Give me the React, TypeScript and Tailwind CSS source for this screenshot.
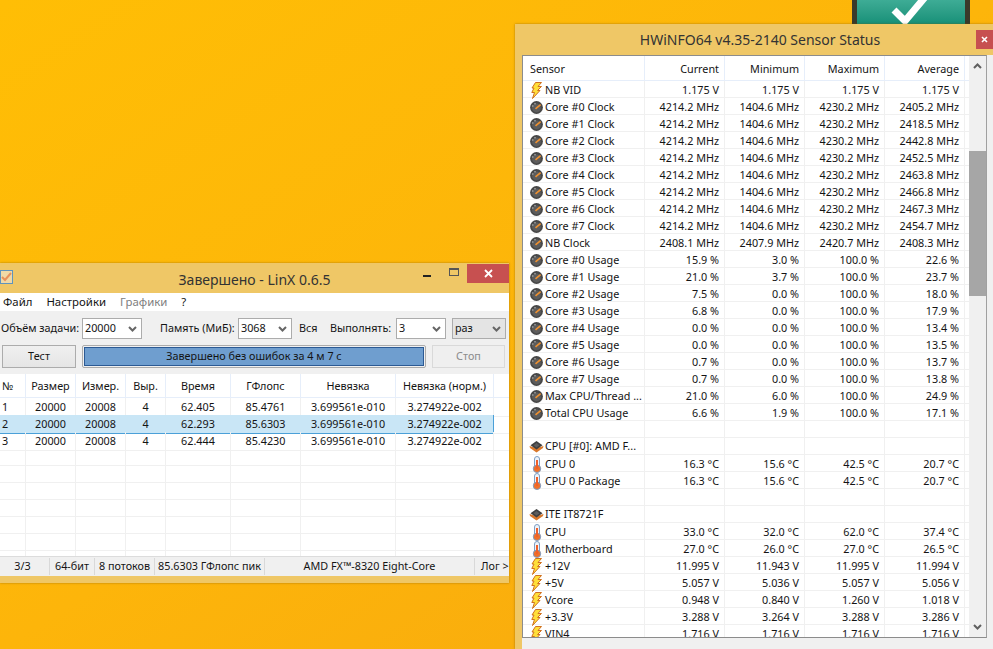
import React from "react";

const font = { fontFamily: '"Noto Sans", "Open Sans", sans-serif' };

function Bolt() {
  return (
    <svg width="11" height="17" viewBox="0 0 11 17" className="shrink-0">
      <path d="M4.5 0.5 L10.5 0.5 L7 4.5 L10.5 4.5 L6.5 8.5 L9 8.5 L1.5 16.5 L3.5 10.5 L0.8 10.5 L3 6 L1 6 Z" fill="#ffdf3a" stroke="#d0701f" strokeWidth="1" />
    </svg>
  );
}
function Gauge() {
  return (
    <svg width="13" height="13" viewBox="0 0 13 13" className="shrink-0">
      <circle cx="6.5" cy="6.5" r="6.4" fill="#474747" />
      <circle cx="6.5" cy="7" r="4.4" fill="#5c5c5c" />
      <circle cx="2.8" cy="5" r="0.7" fill="#c4c4c4" />
      <circle cx="5" cy="2.8" r="0.7" fill="#c4c4c4" />
      <path d="M5.5 7.8 L10.6 3.6" stroke="#ee9030" strokeWidth="1.7" />
    </svg>
  );
}
function Thermo() {
  return (
    <svg width="10" height="17" viewBox="0 0 10 17" className="shrink-0">
      <rect x="2.5" y="0.5" width="5" height="12" rx="2.5" fill="#eef3fa" stroke="#7d9ec4" />
      <circle cx="5" cy="12.8" r="3.7" fill="#f0702a" stroke="#7d9ec4" />
      <rect x="4" y="4" width="2" height="9" fill="#f0602a" />
    </svg>
  );
}
function Chip() {
  return (
    <svg width="15" height="13" viewBox="0 0 15 13" className="shrink-0">
      <path d="M7.5 8 L14.5 6 L14 8 L7.5 12.5 L1 8 L0.5 6 Z" fill="#d9782c" />
      <path d="M7.5 1 L13.5 5.2 L7.5 9.5 L1.5 5.2 Z" fill="#3f3f3f" />
      <path d="M7.5 3 L10.5 5.2 L7.5 7.4 L4.5 5.2 Z" fill="#5c5c5c" />
    </svg>
  );
}

function Chevron({ up = false, color = "#555" }: { up?: boolean; color?: string }) {
  return (
    <svg width="9" height="6" viewBox="0 0 9 6">
      <path d={up ? "M1 5 L4.5 1.5 L8 5" : "M1 1 L4.5 4.5 L8 1"} fill="none" stroke={color} strokeWidth="2" />
    </svg>
  );
}

function Combo({ w, value, gray = false }: { w: string; value: string; gray?: boolean }) {
  return (
    <div className={`${w} ${gray ? "bg-[#e4e4e4]" : "bg-white"} h-[21px] border border-[#acacac] flex items-center justify-between pl-[2px] pr-[4px] shrink-0`}>
      <span>{value}</span>
      <Chevron color="#666" />
    </div>
  );
}

const hwCols = "grid grid-cols-[122px_80px_80px_80px_80px_4px]";
type Row = { icon?: "b" | "g" | "t" | "c"; name?: string; v?: [string, string, string, string] };

const clk = (n: string, a: string): Row => ({ icon: "g", name: n, v: ["4214.2 MHz", "1404.6 MHz", "4230.2 MHz", a] });
const use = (n: string, c: string, mi: string, a: string): Row => ({ icon: "g", name: n, v: [c, mi, "100.0 %", a] });

const rows: Row[] = [
  { icon: "b", name: "NB VID", v: ["1.175 V", "1.175 V", "1.175 V", "1.175 V"] },
  clk("Core #0 Clock", "2405.2 MHz"),
  clk("Core #1 Clock", "2418.5 MHz"),
  clk("Core #2 Clock", "2442.8 MHz"),
  clk("Core #3 Clock", "2452.5 MHz"),
  clk("Core #4 Clock", "2463.8 MHz"),
  clk("Core #5 Clock", "2466.8 MHz"),
  clk("Core #6 Clock", "2467.3 MHz"),
  clk("Core #7 Clock", "2454.7 MHz"),
  { icon: "g", name: "NB Clock", v: ["2408.1 MHz", "2407.9 MHz", "2420.7 MHz", "2408.3 MHz"] },
  use("Core #0 Usage", "15.9 %", "3.0 %", "22.6 %"),
  use("Core #1 Usage", "21.0 %", "3.7 %", "23.7 %"),
  use("Core #2 Usage", "7.5 %", "0.0 %", "18.0 %"),
  use("Core #3 Usage", "6.8 %", "0.0 %", "17.9 %"),
  use("Core #4 Usage", "0.0 %", "0.0 %", "13.4 %"),
  use("Core #5 Usage", "0.0 %", "0.0 %", "13.5 %"),
  use("Core #6 Usage", "0.7 %", "0.0 %", "13.7 %"),
  use("Core #7 Usage", "0.7 %", "0.0 %", "13.8 %"),
  use("Max CPU/Thread ...", "21.0 %", "6.0 %", "24.9 %"),
  use("Total CPU Usage", "6.6 %", "1.9 %", "17.1 %"),
  {},
  { icon: "c", name: "CPU [#0]: AMD F..." },
  { icon: "t", name: "CPU 0", v: ["16.3 °C", "15.6 °C", "42.5 °C", "20.7 °C"] },
  { icon: "t", name: "CPU 0 Package", v: ["16.3 °C", "15.6 °C", "42.5 °C", "20.7 °C"] },
  {},
  { icon: "c", name: "ITE IT8721F" },
  { icon: "t", name: "CPU", v: ["33.0 °C", "32.0 °C", "62.0 °C", "37.4 °C"] },
  { icon: "t", name: "Motherboard", v: ["27.0 °C", "26.0 °C", "27.0 °C", "26.5 °C"] },
  { icon: "b", name: "+12V", v: ["11.995 V", "11.943 V", "11.995 V", "11.994 V"] },
  { icon: "b", name: "+5V", v: ["5.057 V", "5.036 V", "5.057 V", "5.056 V"] },
  { icon: "b", name: "Vcore", v: ["0.948 V", "0.840 V", "1.260 V", "1.018 V"] },
  { icon: "b", name: "+3.3V", v: ["3.288 V", "3.264 V", "3.288 V", "3.286 V"] },
  { icon: "b", name: "VIN4", v: ["1.716 V", "1.716 V", "1.716 V", "1.716 V"] },
];

function Icon({ k }: { k?: Row["icon"] }) {
  const g = k === "b" ? <Bolt /> : k === "g" ? <Gauge /> : k === "t" ? <Thermo /> : k === "c" ? <Chip /> : null;
  return <span className="w-[15px] h-[16px] flex items-center justify-center shrink-0">{g}</span>;
}

function HwRow({ r }: { r: Row }) {
  return (
    <div className={`${hwCols} h-[17px] border-b border-[#f0f0f0] leading-[18px]`}>
      <div className="flex items-center pl-[6px] gap-[1px] border-r border-[#f0f0f0] overflow-hidden whitespace-nowrap">
        <Icon k={r.icon} />
        <span>{r.name}</span>
      </div>
      {[0, 1, 2, 3].map((i) => (
        <div key={i} className="text-right pr-[5px] border-r border-[#f0f0f0] whitespace-nowrap">
          {r.v ? r.v[i] : ""}
        </div>
      ))}
      <div />
    </div>
  );
}

function HwHead() {
  const c = "text-right pr-[5px] border-r border-[#e6eefa] leading-[26px]";
  return (
    <div className={`${hwCols} h-[25px] border-b border-[#e6eefa]`}>
      <div className="pl-[7px] border-r border-[#e6eefa] leading-[26px]">Sensor</div>
      <div className={c}>Current</div>
      <div className={c}>Minimum</div>
      <div className={c}>Maximum</div>
      <div className={c}>Average</div>
      <div />
    </div>
  );
}

const lxCols = "grid grid-cols-[26px_50px_50px_40px_65px_70px_95px_98px_15px]";
const lxRows = [
  ["1", "20000", "20008", "4", "62.405", "85.4761", "3.699561e-010", "3.274922e-002"],
  ["2", "20000", "20008", "4", "62.293", "85.6303", "3.699561e-010", "3.274922e-002"],
  ["3", "20000", "20008", "4", "62.444", "85.4230", "3.699561e-010", "3.274922e-002"],
];
const lxHead = ["№", "Размер", "Измер.", "Выр.", "Время", "ГФлопс", "Невязка", "Невязка (норм.)"];

function LinX() {
  return (
    <div className="absolute left-0 top-[263px] w-[509px] h-[320px] bg-[#efc766] flex flex-col text-[10.8px] text-[#141414] shadow-[0_0_2px_rgba(120,80,0,0.6)] pb-[7px]" style={font}>
      <div className="h-[30px] relative flex items-center justify-center shrink-0 text-[14px] text-[#333] pt-[2px]">
        <span>Завершено - LinX 0.6.5</span>
        <div className="absolute left-0 top-[7px] w-[13px] h-[14px] border border-[#5f94bd] bg-[#f0d9a6] flex items-center justify-center">
          <svg width="11" height="10" viewBox="0 0 11 10"><path d="M1 5 L4 8 L10 1" fill="none" stroke="#e8905a" strokeWidth="2" /></svg>
        </div>
        <div className="absolute left-[423px] top-[12px] w-[8px] h-[2px] bg-[#222]" />
        <div className="absolute left-[449px] top-[5px] w-[10px] h-[8px] border border-[#555] border-t-2" />
        <div className="absolute right-0 top-[1px] w-[42px] h-[19px] bg-[#c75050] flex items-center justify-center">
          <svg width="9" height="9" viewBox="0 0 9 9"><path d="M1 1 L8 8 M8 1 L1 8" stroke="#fff" strokeWidth="1.8" /></svg>
        </div>
      </div>
      <div className="flex-1 flex flex-col bg-[#f0f0f0] min-h-0">
        <div className="h-[18px] bg-white flex items-center gap-[14px] pl-[3px] shrink-0 text-[11.4px]">
          <span>Файл</span>
          <span>Настройки</span>
          <span className="text-[#808080]">Графики</span>
          <span>?</span>
        </div>
        <div className="h-[7px] shrink-0" />
        <div className="flex items-center h-[21px] pl-[1px] shrink-0 whitespace-nowrap">
          <span className="w-[81px] shrink-0">Объём задачи:</span>
          <Combo w="w-[60px]" value="20000" />
          <span className="w-[96px] pl-[18px] shrink-0">Память (МиБ):</span>
          <Combo w="w-[54px]" value="3068" />
          <span className="pl-[7px] w-[38px] shrink-0">Вся</span>
          <span className="w-[66px] shrink-0">Выполнять:</span>
          <Combo w="w-[50px]" value="3" />
          <div className="w-[6px] shrink-0" />
          <Combo w="w-[54px]" value="раз" gray />
        </div>
        <div className="flex items-center h-[24px] mt-[5px] pl-[2px] shrink-0">
          <div className="w-[74px] h-[23px] border border-[#acacac] bg-gradient-to-b from-[#f0f0f0] to-[#e5e5e5] flex items-center justify-center">Тест</div>
          <div className="ml-[6px] w-[344px] h-[23px] border border-[#acacac] p-[1px] rounded-[2px]">
            <div className="h-full bg-[#6f9ecf] border border-[#2c5a94] flex items-center justify-center">Завершено без ошибок за 4 м 7 с</div>
          </div>
          <div className="ml-[6px] w-[73px] h-[23px] border border-[#d9d9d9] bg-[#efefef] text-[#8c8c8c] flex items-center justify-center">Стоп</div>
        </div>
        <div className="h-[6px] shrink-0" />
        <div className="flex-1 bg-white flex flex-col min-h-0 overflow-hidden">
          <div className={`${lxCols} h-[24px] border-b border-[#e6eefa] shrink-0 leading-[24px]`}>
            {lxHead.map((h, i) => (
              <div key={i} className={`border-r border-[#e6eefa] whitespace-nowrap ${i === 0 ? "pl-[2px]" : "text-center"}`}>{h}</div>
            ))}
            <div />
          </div>
          {Array.from({ length: 10 }).map((_, ri) => {
            const r = lxRows[ri];
            const sel = ri === 1;
            const blue = ri === 0 || ri === 1;
            return (
              <div key={ri} className={`${lxCols} h-[17px] shrink-0 leading-[18px]`}>
                {Array.from({ length: 8 }).map((_, i) => (
                  <div key={i} className={`border-r border-b whitespace-nowrap ${sel ? "bg-[#c9e6f6]" : ""} ${blue ? "border-b-[#4ba0d8]" : "border-b-[#f0f0f0]"} ${sel ? (i === 7 ? "border-r-[#4ba0d8]" : "border-r-[#c9e6f6]") : "border-r-[#f0f0f0]"} ${i === 0 ? "pl-[2px]" : "text-center"}`}>
                    {r ? r[i] : ""}
                  </div>
                ))}
                <div className="border-b border-b-[#f0f0f0]" />
              </div>
            );
          })}
        </div>
        <div className="h-[20px] shrink-0 border-t border-[#dcdcdc] flex items-center whitespace-nowrap">
          <div className="w-[50px] text-center border-r border-[#d9d9d9] pr-[4px]">3/3</div>
          <div className="w-[45px] text-center border-r border-[#d9d9d9]">64-бит</div>
          <div className="w-[60px] text-center border-r border-[#d9d9d9]">8 потоков</div>
          <div className="w-[110px] text-center border-r border-[#d9d9d9]">85.6303 ГФлопс пик</div>
          <div className="w-[210px] text-center border-r border-[#d9d9d9]">AMD FX™-8320 Eight-Core</div>
          <div className="flex-1 pl-[6px]">Лог &gt;</div>
        </div>
      </div>
    </div>
  );
}

function HwInfo() {
  return (
    <div className="absolute left-[515px] top-[24px] w-[478px] h-[625px] bg-[#efc766] flex flex-col text-[10.8px] text-[#141414] shadow-[0_0_2px_rgba(120,80,0,0.6)]" style={font}>
      <div className="h-[31px] relative flex items-center justify-center shrink-0 text-[14px] text-[#333] pl-[12px]">
        <span>HWiNFO64 v4.35-2140 Sensor Status</span>
        <div className="absolute right-0 top-[6px] w-[17px] h-[19px] bg-[#c75050] flex items-center justify-center">
          <svg width="7" height="7" viewBox="0 0 7 7"><path d="M1 1 L6 6 M6 1 L1 6" stroke="#fff" strokeWidth="1.6" /></svg>
        </div>
      </div>
      <div className="flex-1 ml-[7px] bg-[#f0f0f0] min-h-0 flex flex-col">
        <div className="h-[583px] mr-[6px] border border-[#8c8c8c] border-r-[#a0a0a0] flex bg-white shrink-0 overflow-hidden">
          <div className="w-[446px] shrink-0 overflow-hidden">
            <HwHead />
            {rows.map((r, i) => (
              <HwRow key={i} r={r} />
            ))}
          </div>
          <div className="flex-1 bg-[#f0f0f0] flex flex-col items-center justify-between relative py-[7px]">
            <Chevron up color="#606060" />
            <div className="absolute left-0 right-0 top-[95px] h-[145px] bg-[#a6a6a6]" />
            <Chevron color="#606060" />
          </div>
        </div>
      </div>
    </div>
  );
}

export default function App() {
  return (
    <div className="relative w-[993px] h-[649px] overflow-hidden bg-gradient-to-br from-[#ffbe05] via-[#fdb50a] to-[#f7a70f]">
      <div className="absolute left-[852px] top-[-10px] w-[118px] h-[34px] bg-gradient-to-b from-[#4bb8a2] to-[#159078] border-x-[5px] border-x-[#3a3a2a]">
        <svg width="108" height="34" viewBox="0 0 108 34">
          <path d="M37 20 L48 31 L69 6" fill="none" stroke="#fff" strokeWidth="7" />
        </svg>
      </div>
      <LinX />
      <HwInfo />
    </div>
  );
}
